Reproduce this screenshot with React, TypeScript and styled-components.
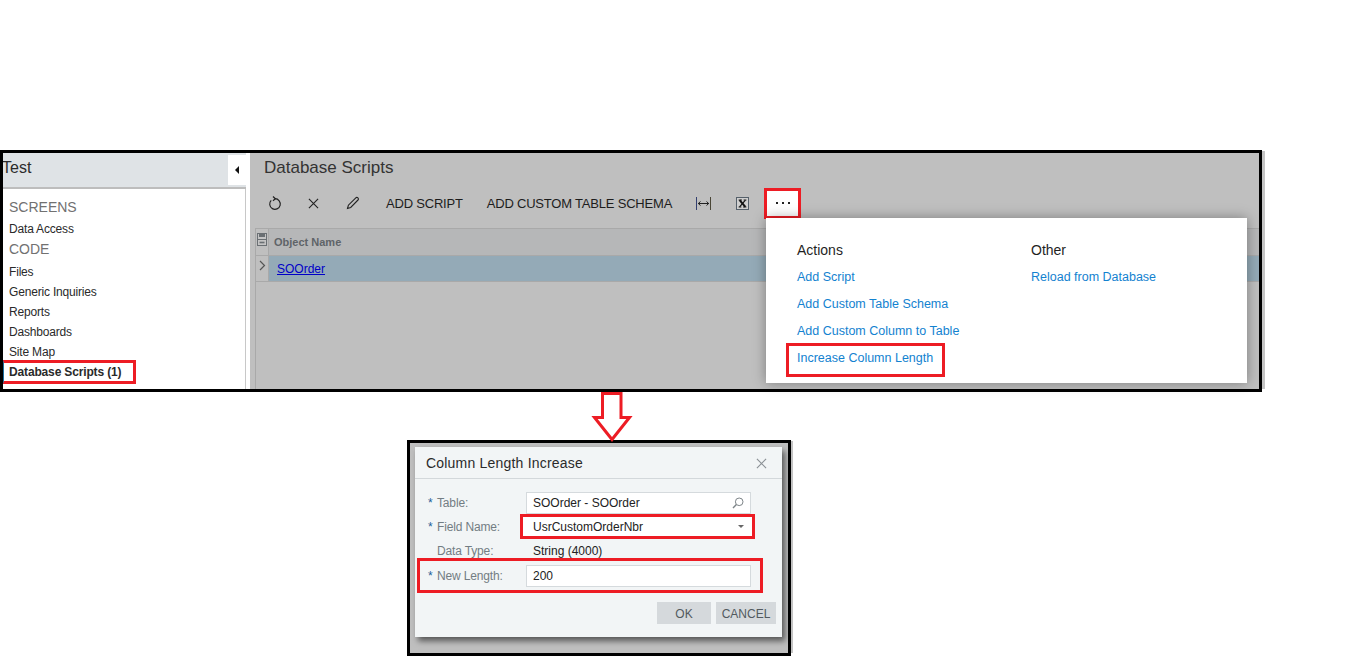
import React, { FunctionComponent } from 'react';
import styled, { createGlobalStyle } from 'styled-components';

const GlobalStyle = createGlobalStyle`
	html, body {
		margin: 0;
		padding: 0;
		background: #fff;
		font-family: "Liberation Sans", Arial, sans-serif;
	}
`;

const Page = styled.div`
	width: 1350px;
	height: 658px;
	padding-top: 150px;
	box-sizing: border-box;
	overflow: hidden;
`;

const Frame = styled.div`
	position: relative;
	display: flex;
	width: 1262px;
	height: 242px;
	box-sizing: border-box;
	border: 3px solid #000;
	box-shadow: 5px -1px 0 -2px #c4c4c4;
	background: #bfbfbf;
`;

const Sidebar = styled.aside`
	flex: 0 0 247px;
	display: flex;
	flex-direction: column;
	background: #fff;
	overflow: hidden;
`;

const SidebarHeader = styled.div`
	display: flex;
	justify-content: space-between;
	align-items: center;
	height: 36px;
	width: 243px;
	box-sizing: border-box;
	border-bottom: 2px solid #bdbdbd;
	background: #dfe3e6;
`;

const SidebarTitle = styled.span`
	margin: -4px 0 0 -1px;
	font-size: 16px;
	line-height: 28px;
	color: #2b2b2b;
`;

const CollapseButton = styled.button`
	display: flex;
	align-items: center;
	justify-content: center;
	width: 18px;
	height: 30px;
	padding: 0;
	border: 0;
	background: #fff;
`;

const Nav = styled.nav`
	flex: 1;
	width: 243px;
	box-sizing: border-box;
	padding-top: 8px;
	border-right: 1px solid #c8c8c8;
`;

const NavItem = styled.div`
	height: 20px;
	padding-left: 6px;
	font-size: 12px;
	letter-spacing: -0.18px;
	line-height: 18px;
	color: #2a2a2a;
`;

const NavHeading = styled.div`
	height: 23px;
	padding-left: 6px;
	font-size: 14px;
	line-height: 21px;
	color: #717171;

	${NavItem} + & {
		height: 24px;
		margin-top: -1px;
	}
`;

const ActiveNavItem = styled.div`
	width: 133px;
	height: 24px;
	margin-top: -3px;
	box-sizing: border-box;
	padding-left: 5px;
	border: 3px solid #ed1c24;
	border-left: 1px solid #1f6f9f;
	font-size: 12px;
	font-weight: bold;
	letter-spacing: -0.15px;
	line-height: 18px;
	color: #2a2a2a;
`;

const Content = styled.main`
	flex: 1;
	display: flex;
	flex-direction: column;
	min-width: 0;
`;

const PageTitle = styled.h1`
	height: 29px;
	margin: 0 0 4px 14px;
	font-size: 17px;
	font-weight: normal;
	line-height: 29px;
	color: #333;
`;

const Toolbar = styled.div`
	display: flex;
	align-items: center;
	height: 34px;
	margin-left: 5px;
`;

const IconButton = styled.button`
	display: flex;
	align-items: center;
	justify-content: center;
	width: 39px;
	height: 34px;
	padding: 0;
	border: 0;
	background: none;
	color: #222;
`;

const TextButton = styled.button`
	height: 34px;
	padding: 0 12px;
	border: 0;
	background: none;
	font-family: inherit;
	font-size: 13px;
	letter-spacing: -0.2px;
	color: #1d1d1d;
	white-space: nowrap;

	${IconButton} + & {
		margin-left: 2px;
	}
`;

const MoreButton = styled.button`
	display: flex;
	align-items: center;
	justify-content: center;
	gap: 4px;
	width: 37px;
	height: 31px;
	margin-left: 2px;
	box-sizing: border-box;
	padding: 0;
	border: 3px solid #ed1c24;
	background: #fff;
`;

const Dot = styled.i`
	width: 2px;
	height: 2px;
	background: #222;
`;

const Grid = styled.div`
	flex: 1;
	margin: 8px 0 0 5px;
	border-left: 1px solid #a9a9a9;
	border-top: 1px solid #a9a9a9;
`;

const GridRow = styled.div<{ $header?: boolean }>`
	display: flex;
	height: ${({ $header }) => ($header ? '26px' : '25px')};
	border-bottom: 1px solid #a9a9a9;
	background: ${({ $header }) => ($header ? '#b6b7b8' : '#94aab7')};
`;

const GridGutter = styled.div`
	flex: 0 0 13px;
	display: flex;
	align-items: flex-start;
	justify-content: center;
	padding-top: 4px;
	box-sizing: border-box;
	background: #bfbfbf;
	border-right: 1px solid #a9a9a9;
`;

const HeaderCell = styled.div`
	padding-left: 5px;
	font-size: 11px;
	font-weight: bold;
	line-height: 26px;
	color: #5f6468;
`;

const LinkCell = styled.a`
	margin-left: 8px;
	font-size: 12px;
	line-height: 26px;
	color: #0000c8;
	text-decoration: underline;
`;

const Menu = styled.div`
	position: absolute;
	top: 65px;
	left: 763px;
	display: flex;
	width: 481px;
	height: 165px;
	box-sizing: border-box;
	padding: 20px 0 0 31px;
	background: #fff;
	box-shadow: 0 0 12px rgba(0, 0, 0, 0.35);
`;

const MenuColumn = styled.div`
	flex: 0 0 234px;
`;

const MenuHeading = styled.div`
	height: 26px;
	font-size: 14px;
	line-height: 25px;
	color: #1f1f1f;
`;

const MenuLink = styled.a`
	display: block;
	height: 27px;
	font-size: 12.5px;
	line-height: 27px;
	color: #1382d0;
	white-space: nowrap;
`;

const MarkedMenuLink = styled(MenuLink)`
	width: 159px;
	height: 34px;
	margin: -2px 0 0 -11px;
	box-sizing: border-box;
	padding-left: 8px;
	border: 3px solid #ed1c24;
	line-height: 24px;
`;

const ArrowHolder = styled.div`
	position: relative;
	z-index: 1;
	height: 48px;
	padding-left: 592px;
`;

const DialogFrame = styled.div`
	width: 384px;
	height: 216px;
	margin-left: 407px;
	box-sizing: border-box;
	padding: 4px 0 0 5px;
	border: 3px solid #000;
	background: #bfbfbf;
	box-shadow: 4px -1px 0 -2px #c4c4c4;
`;

const Dialog = styled.section`
	width: 367px;
	height: 190px;
	background: #f2f5f6;
	box-shadow: 3px 4px 6px rgba(0, 0, 0, 0.55);
`;

const DialogHeader = styled.header`
	display: flex;
	align-items: center;
	justify-content: space-between;
	height: 32px;
	box-sizing: border-box;
	padding: 1px 15px 0 11px;
	border-bottom: 1px solid #d3d8db;
`;

const DialogTitle = styled.h2`
	margin: 0;
	font-size: 14px;
	font-weight: normal;
	letter-spacing: 0.2px;
	color: #2b2b2b;
`;

const Form = styled.div`
	padding: 12px 0 0 11px;
`;

const FieldRow = styled.div<{ $marked?: boolean; $height: number }>`
	display: flex;
	align-items: center;
	height: ${({ $height }) => $height}px;
	box-sizing: border-box;
	${({ $marked }) => $marked && `
		width: 346px;
		margin-left: -9px;
		padding-left: 6px;
		border: 3px solid #ed1c24;
	`}
`;

const ReadOnlyRow = styled(FieldRow)`
	padding-top: 4px;
`;

const Label = styled.label<{ $narrow?: boolean }>`
	display: flex;
	flex: 0 0 ${({ $narrow }) => ($narrow ? '94px' : '100px')};
	font-size: 12px;
	letter-spacing: -0.15px;
	color: #737d83;
`;

const Star = styled.span`
	flex: 0 0 9px;
	margin-left: 2px;
	color: #1f5f99;
`;

const Input = styled.div`
	display: flex;
	align-items: center;
	justify-content: space-between;
	width: 225px;
	height: 22px;
	box-sizing: border-box;
	padding: 0 6px;
	border: 1px solid #d5dadd;
	background: #fff;
	font-size: 12px;
	color: #222;
`;

const MarkedInput = styled(Input)`
	width: 235px;
	height: 25px;
	padding: 0 8px 0 10px;
	border: 3px solid #ed1c24;
`;

const ValueText = styled.span`
	padding-left: 7px;
	font-size: 12px;
	color: #222;
`;

const Actions = styled.div`
	display: flex;
	justify-content: flex-end;
	gap: 5px;
	margin-top: 9px;
	padding-right: 6px;
`;

const DialogButton = styled.button<{ $width: number }>`
	width: ${({ $width }) => $width}px;
	height: 22px;
	padding: 1px 0 0;
	border: 0;
	background: #d5d9dc;
	font-family: inherit;
	font-size: 12px;
	color: #525a5f;
`;

const RefreshIcon = () => (
	<svg width="16" height="16" viewBox="0 0 16 16" fill="none" stroke="currentColor" strokeWidth="1.2">
		<path d="M8 3.7A5.3 5.3 0 1 1 4.2 5.3" />
		<path d="M6 1.5L8.4 3.7L6 5.8" />
	</svg>
);

const CloseIcon: FunctionComponent<{ size: number; color?: string }> = ({ size, color = 'currentColor' }) => (
	<svg width={size} height={size} viewBox="0 0 12 12" fill="none" stroke={color} strokeWidth="1.2">
		<path d="M1 1L11 11M11 1L1 11" />
	</svg>
);

const PencilIcon = () => (
	<svg width="14" height="14" viewBox="0 0 14 14" fill="none" stroke="currentColor" strokeWidth="1.1">
		<path d="M1.5 12.5L2.4 9.2L9.8 1.8C10.4 1.2 11.2 1.2 11.9 1.9C12.6 2.6 12.6 3.4 12 4L4.7 11.4Z" />
	</svg>
);

const FitColumnsIcon = () => (
	<svg width="15" height="13" viewBox="0 0 15 13" fill="none">
		<path d="M0.5 0V13" stroke="#33406f" />
		<path d="M14.5 0V13" stroke="#4a4636" />
		<path d="M2 6.5H13" stroke="#222" />
		<path d="M4.5 4.5L2.3 6.5L4.5 8.5M10.5 4.5L12.7 6.5L10.5 8.5" stroke="#222" />
	</svg>
);

const ExcelIcon = () => (
	<svg width="13" height="13" viewBox="0 0 13 13" fill="none">
		<rect x="0.5" y="0.5" width="12" height="12" fill="#cfcfcf" stroke="#55606a" />
		<path d="M3.6 3.2L9.4 9.8" stroke="#111" strokeWidth="2" />
		<path d="M9.4 3.2L3.6 9.8" stroke="#111" strokeWidth="1.2" />
		<path d="M2.6 3H6M7.6 3H10.4M2.6 10H5.4M7 10H10.4" stroke="#111" strokeWidth="0.9" />
	</svg>
);

const SaveIcon = () => (
	<svg width="10" height="13" viewBox="0 0 10 13" fill="none">
		<rect x="0.5" y="0.5" width="9" height="12" fill="#c4c4c4" stroke="#6a6f73" />
		<rect x="2" y="1" width="6" height="3" fill="#6a6f73" />
		<path d="M0.5 6.5H9.5" stroke="#6a6f73" />
		<path d="M2.5 9.5H7.5" stroke="#6a6f73" strokeWidth="1.6" />
	</svg>
);

const ChevronIcon = () => (
	<svg width="7" height="11" viewBox="0 0 7 11" fill="none" stroke="#555" strokeWidth="1.2">
		<path d="M1 1L5.5 5.5L1 10" />
	</svg>
);

const SearchIcon = () => (
	<svg width="12" height="12" viewBox="0 0 12 12" fill="none" stroke="#7d8488" strokeWidth="1">
		<circle cx="7.2" cy="4.8" r="3.8" />
		<path d="M4.4 7.6L1 11" strokeWidth="1.4" />
	</svg>
);

const Arrow = () => (
	<svg width="42" height="50" viewBox="0 0 42 50" fill="none" stroke="#ed1c24" strokeWidth="3" overflow="visible" style={{ display: 'block' }}>
		<path d="M10.5 1.5H29V25.5H37.5L20 47.5L2.5 25.5H10.5Z" />
	</svg>
);

const Triangle = styled.i<{ $left?: boolean }>`
	width: 0;
	height: 0;
	${({ $left }) => ($left ? `
		border-top: 4px solid transparent;
		border-bottom: 4px solid transparent;
		border-right: 4px solid #111;
	` : `
		border-left: 3.5px solid transparent;
		border-right: 3.5px solid transparent;
		border-top: 3.5px solid #666;
	`)}
`;

const screens = ['Files', 'Generic Inquiries', 'Reports', 'Dashboards', 'Site Map'];

const App: FunctionComponent = () => (
	<Page>
		<GlobalStyle />
		<Frame>
			<Sidebar>
				<SidebarHeader>
					<SidebarTitle>Test</SidebarTitle>
					<CollapseButton><Triangle $left /></CollapseButton>
				</SidebarHeader>
				<Nav>
					<NavHeading>SCREENS</NavHeading>
					<NavItem>Data Access</NavItem>
					<NavHeading>CODE</NavHeading>
					{screens.map(name => <NavItem key={name}>{name}</NavItem>)}
					<ActiveNavItem>Database Scripts (1)</ActiveNavItem>
				</Nav>
			</Sidebar>
			<Content>
				<PageTitle>Database Scripts</PageTitle>
				<Toolbar>
					<IconButton><RefreshIcon /></IconButton>
					<IconButton><CloseIcon size={11} /></IconButton>
					<IconButton><PencilIcon /></IconButton>
					<TextButton>ADD SCRIPT</TextButton>
					<TextButton>ADD CUSTOM TABLE SCHEMA</TextButton>
					<IconButton><FitColumnsIcon /></IconButton>
					<IconButton><ExcelIcon /></IconButton>
					<MoreButton><Dot /><Dot /><Dot /></MoreButton>
				</Toolbar>
				<Grid>
					<GridRow $header>
						<GridGutter><SaveIcon /></GridGutter>
						<HeaderCell>Object Name</HeaderCell>
					</GridRow>
					<GridRow>
						<GridGutter><ChevronIcon /></GridGutter>
						<LinkCell>SOOrder</LinkCell>
					</GridRow>
				</Grid>
			</Content>
			<Menu>
				<MenuColumn>
					<MenuHeading>Actions</MenuHeading>
					<MenuLink>Add Script</MenuLink>
					<MenuLink>Add Custom Table Schema</MenuLink>
					<MenuLink>Add Custom Column to Table</MenuLink>
					<MarkedMenuLink>Increase Column Length</MarkedMenuLink>
				</MenuColumn>
				<MenuColumn>
					<MenuHeading>Other</MenuHeading>
					<MenuLink>Reload from Database</MenuLink>
				</MenuColumn>
			</Menu>
		</Frame>
		<ArrowHolder><Arrow /></ArrowHolder>
		<DialogFrame>
			<Dialog>
				<DialogHeader>
					<DialogTitle>Column Length Increase</DialogTitle>
					<CloseIcon size={11} color="#8a9095" />
				</DialogHeader>
				<Form>
					<FieldRow $height={23}>
						<Label><Star>*</Star>Table:</Label>
						<Input>SOOrder - SOOrder<SearchIcon /></Input>
					</FieldRow>
					<FieldRow $height={25}>
						<Label $narrow><Star>*</Star>Field Name:</Label>
						<MarkedInput>UsrCustomOrderNbr<Triangle /></MarkedInput>
					</FieldRow>
					<ReadOnlyRow $height={19}>
						<Label><Star />Data Type:</Label>
						<ValueText>String (4000)</ValueText>
					</ReadOnlyRow>
					<FieldRow $marked $height={35}>
						<Label><Star>*</Star>New Length:</Label>
						<Input>200</Input>
					</FieldRow>
					<Actions>
						<DialogButton $width={54}>OK</DialogButton>
						<DialogButton $width={60}>CANCEL</DialogButton>
					</Actions>
				</Form>
			</Dialog>
		</DialogFrame>
	</Page>
);

export default App;
